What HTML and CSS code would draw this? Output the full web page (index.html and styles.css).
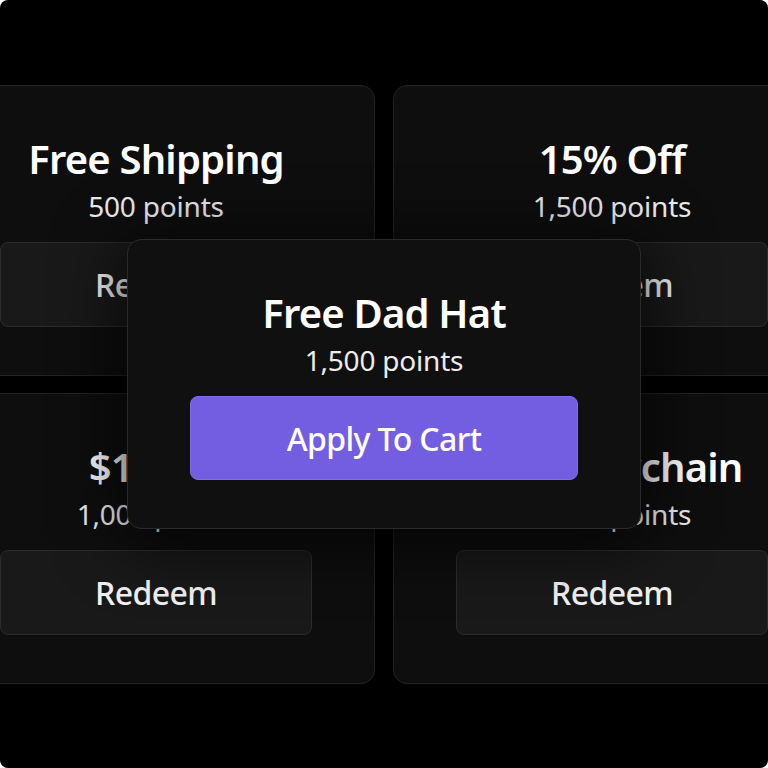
FILE: index.html
```html
<!DOCTYPE html>
<html lang="en">
<head>
<meta charset="utf-8">
<title>Rewards</title>
<link rel="stylesheet" href="styles.css">
</head>
<body>
<main class="frame">
  <section class="rewards">
    <article class="card">
      <h2 class="card-title">Free Shipping</h2>
      <p class="card-points">500 points</p>
      <button class="btn btn-redeem">Redeem</button>
    </article>
    <article class="card">
      <h2 class="card-title">15% Off</h2>
      <p class="card-points">1,500 points</p>
      <button class="btn btn-redeem">Redeem</button>
    </article>
    <article class="card">
      <h2 class="card-title">$10 Off</h2>
      <p class="card-points">1,000 points</p>
      <button class="btn btn-redeem">Redeem</button>
    </article>
    <article class="card">
      <h2 class="card-title">Free Keychain</h2>
      <p class="card-points">2,000 points</p>
      <button class="btn btn-redeem">Redeem</button>
    </article>
  </section>

  <div class="popup card">
    <h2 class="card-title">Free Dad Hat</h2>
    <p class="card-points">1,500 points</p>
    <button class="btn btn-apply">Apply To Cart</button>
  </div>
</main>
</body>
</html>
```

FILE: styles.css
```css
* {
  box-sizing: border-box;
}

html, body {
  margin: 0;
  background: #ffffff;
}

.frame {
  position: relative;
  width: 768px;
  height: 768px;
  overflow: hidden;
  border-radius: 8px;
  background: #000000;
  font-family: "Noto Sans", "DejaVu Sans", sans-serif;
  color: #ffffff;
}

.rewards {
  display: grid;
  grid-template-columns: 438px 438px;
  grid-auto-rows: 291px;
  gap: 17px 18px;
  margin-left: -63px;
  padding-top: 85px;
}

.card {
  display: flex;
  flex-direction: column;
  align-items: center;
  padding: 49px 62px 48px;
  border: 1px solid #232323;
  border-radius: 14px;
  background: #0e0e0e;
}

.card-title {
  margin: 0;
  font-size: 40px;
  line-height: 48px;
  font-weight: 600;
  letter-spacing: -0.8px;
  white-space: nowrap;
}

.card-points {
  margin: 5px 0 0;
  font-size: 28px;
  line-height: 36px;
  font-weight: 400;
  letter-spacing: -0.2px;
  color: #ececec;
  white-space: nowrap;
}

.btn {
  width: 100%;
  height: 85px;
  margin-top: 18px;
  border-radius: 8px;
  font-family: inherit;
  font-size: 32px;
  font-weight: 500;
  letter-spacing: -0.6px;
  color: #f2f2f2;
}

.btn-redeem {
  border: 1px solid #2c2c2c;
  background: #191919;
}

.popup {
  position: absolute;
  left: 127px;
  top: 239px;
  width: 514px;
  height: 290px;
  border-color: #2a2a2a;
  background: #101010;
  box-shadow: 0 8px 70px rgba(0, 0, 0, 0.85);
}

.btn-apply {
  border: 1px solid #7f6ee6;
  background: #735ee2;
  color: #ffffff;
}
```
